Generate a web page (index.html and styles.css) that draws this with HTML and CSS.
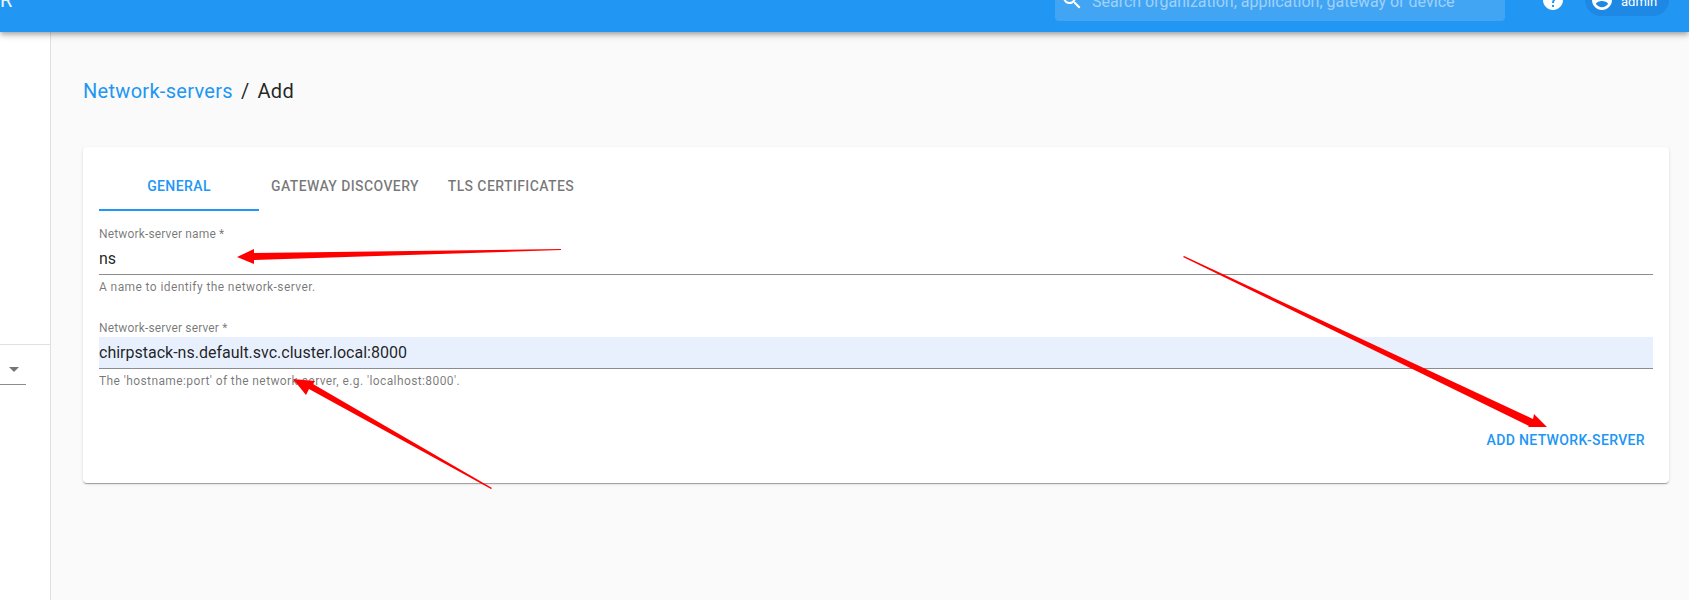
FILE: index.html
```html
<!DOCTYPE html>
<html lang="en">
<head>
<meta charset="utf-8">
<title>Network-servers / Add</title>
<link rel="stylesheet" href="styles.css">
</head>
<body>
<header class="appbar">
  <div class="logo">R</div>
  <div class="search">
    <svg class="search-icon" viewBox="0 0 24 24"><path d="M15.5 14h-.79l-.28-.27C15.41 12.59 16 11.11 16 9.5 16 5.91 13.09 3 9.5 3S3 5.91 3 9.5 5.91 16 9.5 16c1.61 0 3.09-.59 4.23-1.57l.27.28v.79l5 4.99L20.49 19l-4.99-5zm-6 0C7.01 14 5 11.99 5 9.5S7.01 5 9.5 5 14 7.01 14 9.5 11.99 14 9.5 14z"/></svg>
    <span class="placeholder">Search organization, application, gateway or device</span>
  </div>
  <svg class="help-icon" viewBox="0 0 24 24"><path d="M12 2C6.48 2 2 6.48 2 12s4.48 10 10 10 10-4.48 10-10S17.52 2 12 2zm1 17h-2v-2h2v2zm2.07-7.75l-.9.92C13.45 12.9 13 13.5 13 15h-2v-.5c0-1.1.45-2.1 1.17-2.83l1.24-1.26c.37-.36.59-.86.59-1.41 0-1.1-.9-2-2-2s-2 .9-2 2H8c0-2.21 1.79-4 4-4s4 1.79 4 4c0 .88-.36 1.68-.93 2.25z"/></svg>
  <div class="chip">
    <svg class="chip-icon" viewBox="0 0 24 24"><path d="M12 2C6.48 2 2 6.48 2 12s4.48 10 10 10 10-4.48 10-10S17.52 2 12 2zm0 3c1.66 0 3 1.34 3 3s-1.34 3-3 3-3-1.34-3-3 1.34-3 3-3zm0 14.2c-2.5 0-4.71-1.28-6-3.22.03-1.99 4-3.08 6-3.08 1.99 0 5.97 1.09 6 3.08-1.29 1.94-3.5 3.22-6 3.22z"/></svg>
    <span class="chip-label">admin</span>
  </div>
</header>
<div class="layout">
  <aside class="sidebar">
    <div class="side-top"></div>
    <div class="side-select"><span class="caret"></span></div>
  </aside>
  <main class="main">
    <div class="crumbs">
      <a class="crumb-link">Network-servers</a>
      <span class="crumb-sep">/</span>
      <span class="crumb-current">Add</span>
    </div>
    <section class="card">
      <nav class="tabs">
        <div class="tab tab-active">General</div>
        <div class="tab">Gateway discovery</div>
        <div class="tab">TLS certificates</div>
      </nav>
      <div class="field field-first">
        <label class="field-label">Network-server name *</label>
        <div class="field-input">ns</div>
        <p class="field-help">A name to identify the network-server.</p>
      </div>
      <div class="field field-second">
        <label class="field-label">Network-server server *</label>
        <div class="field-input field-autofill">chirpstack-ns.default.svc.cluster.local:8000</div>
        <p class="field-help">The 'hostname:port' of the network-server, e.g. 'localhost:8000'.</p>
      </div>
      <div class="actions"><button class="btn">Add network-server</button></div>
    </section>
  </main>
</div>
<svg class="annotations" viewBox="0 0 1689 600">
  <polygon points="561,249 254,253 254,249 237,257 254,264 254,260 561,250"/>
  <polygon points="492,488 491,489 309,389 306,395 293,379 315,381 313,384"/>
  <polygon points="1183,257 1184,256 1533,419 1534,414 1547,427 1528,427 1529,426"/>
</svg>
</body>
</html>
```
FILE: styles.css
```css
* { box-sizing: border-box; }
html, body { margin: 0; height: 600px; overflow: hidden; }
body { background: #fafafa; font-family: Roboto, "Liberation Sans", sans-serif; color: rgba(0,0,0,.87); position: relative; }

.appbar {
  height: 64px; margin-top: -32px; background: #2196f3; display: flex; align-items: center; color: #fff;
  position: relative; z-index: 2; padding-right: 20px;
  box-shadow: 0 2px 4px -1px rgba(0,0,0,.2), 0 4px 5px 0 rgba(0,0,0,.14), 0 1px 10px 0 rgba(0,0,0,.12);
}
.logo { font-size: 20px; line-height: 20px; width: 1055px; color: #e8f3fd; flex: none; }
.search { width: 450px; height: 42px; border-radius: 4px; background: rgba(255,255,255,.15); display: flex; align-items: center; padding-left: 5px; flex: none; }
.search-icon { width: 24px; height: 24px; fill: #fff; flex: none; }
.placeholder { margin-left: 8px; margin-top: 3px; font-size: 16px; color: rgba(255,255,255,.5); white-space: nowrap; }
.help-icon { width: 24px; height: 24px; fill: #fff; flex: none; margin-left: 36px; }
.chip { width: 84px; height: 32px; border-radius: 16px; background: #1e88e5; display: flex; align-items: center; padding-left: 5px; margin-left: 20px; flex: none; }
.chip-icon { width: 24px; height: 24px; fill: #fff; flex: none; }
.chip-label { margin-left: 7px; margin-top: 2px; font-size: 13px; }

.layout { display: flex; height: 568px; }
.sidebar { width: 51px; flex: none; background: #fff; border-right: 1px solid #e0e0e0; }
.side-top { height: 313px; border-bottom: 1px solid #e0e0e0; }
.side-select { width: 26px; height: 40px; border-bottom: 1px solid #8c8c8c; position: relative; }
.caret { position: absolute; left: 9px; top: 22px; border-left: 5px solid transparent; border-right: 5px solid transparent; border-top: 5px solid #757575; }

.main { flex: 1; padding: 45px 20px 0 32px; min-width: 0; }
.crumbs { display: flex; align-items: center; height: 28px; font-size: 20px; letter-spacing: .3px; }
.crumb-link { color: #2196f3; }
.crumb-sep { margin-left: 8px; }
.crumb-current { margin-left: 8px; }

.card { margin-top: 42px; height: 336px; background: #fff; border-radius: 4px; padding: 16px;
  box-shadow: 0 2px 1px -1px rgba(0,0,0,.2), 0 1px 1px 0 rgba(0,0,0,.14), 0 1px 3px 0 rgba(0,0,0,.12); display: flex; flex-direction: column; }
.tabs { display: flex; height: 48px; flex: none; }
.tab { min-width: 160px; padding: 0 12px 2px; display: flex; align-items: center; justify-content: center; font-size: 14px; font-weight: 500; letter-spacing: .4px; text-transform: uppercase; color: rgba(0,0,0,.54); white-space: nowrap; }
.tab-active { color: #2196f3; box-shadow: inset 0 -2px 0 #2196f3; }

.field-first { margin-top: 16px; }
.field-second { margin-top: 27px; }
.field-label { display: block; font-size: 12px; line-height: 14px; letter-spacing: .15px; color: rgba(0,0,0,.54); }
.field-input { height: 32px; margin-top: 2px; border-bottom: 1px solid #8c8c8c; font-size: 16px; line-height: 31px; }
.field-autofill { background: #e8f0fe; }
.field-help { margin: 5px 0 0; font-size: 12px; line-height: 14px; letter-spacing: .4px; color: rgba(0,0,0,.54); }

.actions { display: flex; justify-content: flex-end; margin-top: 34px; }
.btn { border: 0; background: none; padding: 6px 8px; font: 500 14px/24px Roboto, "Liberation Sans", sans-serif; letter-spacing: .35px; text-transform: uppercase; color: #2196f3; }

.annotations { position: absolute; left: 0; top: 0; width: 1689px; height: 600px; z-index: 5; pointer-events: none; }
.annotations polygon { fill: #ff0000; }
```
